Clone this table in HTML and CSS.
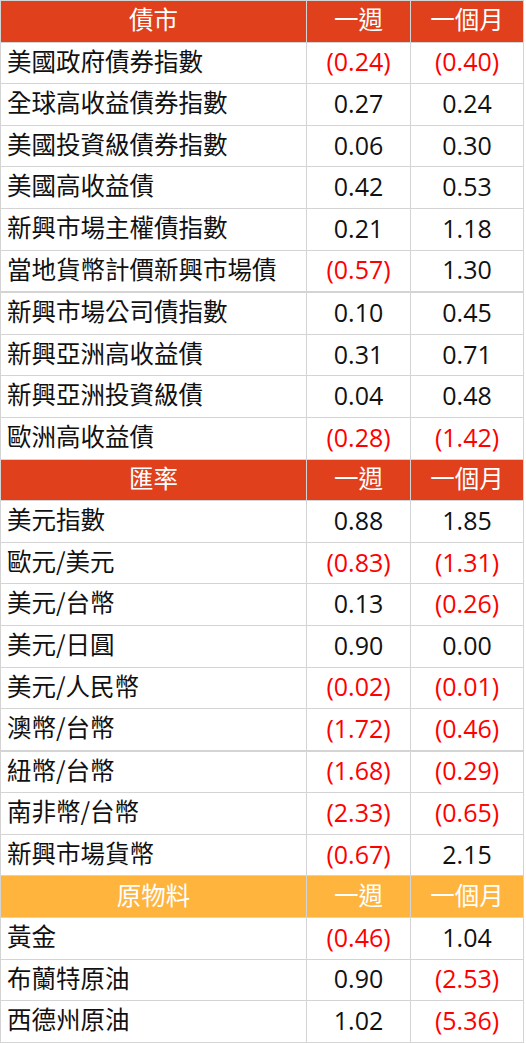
FILE: index.html
```html
<!DOCTYPE html>
<html lang="zh-Hant">
<head>
<meta charset="utf-8">
<link rel="stylesheet" href="styles.css">
</head>
<body>
<div class="table">
  <div class="row head red"><div class="c name-h">債市</div><div class="c">一週</div><div class="c">一個月</div></div>
  <div class="row"><div class="c name">美國政府債券指數</div><div class="c neg">(0.24)</div><div class="c neg">(0.40)</div></div>
  <div class="row"><div class="c name">全球高收益債券指數</div><div class="c">0.27</div><div class="c">0.24</div></div>
  <div class="row"><div class="c name">美國投資級債券指數</div><div class="c">0.06</div><div class="c">0.30</div></div>
  <div class="row"><div class="c name">美國高收益債</div><div class="c">0.42</div><div class="c">0.53</div></div>
  <div class="row"><div class="c name">新興市場主權債指數</div><div class="c">0.21</div><div class="c">1.18</div></div>
  <div class="row thick"><div class="c name">當地貨幣計價新興市場債</div><div class="c neg">(0.57)</div><div class="c">1.30</div></div>
  <div class="row"><div class="c name">新興市場公司債指數</div><div class="c">0.10</div><div class="c">0.45</div></div>
  <div class="row"><div class="c name">新興亞洲高收益債</div><div class="c">0.31</div><div class="c">0.71</div></div>
  <div class="row"><div class="c name">新興亞洲投資級債</div><div class="c">0.04</div><div class="c">0.48</div></div>
  <div class="row"><div class="c name">歐洲高收益債</div><div class="c neg">(0.28)</div><div class="c neg">(1.42)</div></div>
  <div class="row head red"><div class="c name-h">匯率</div><div class="c">一週</div><div class="c">一個月</div></div>
  <div class="row"><div class="c name">美元指數</div><div class="c">0.88</div><div class="c">1.85</div></div>
  <div class="row"><div class="c name">歐元/美元</div><div class="c neg">(0.83)</div><div class="c neg">(1.31)</div></div>
  <div class="row"><div class="c name">美元/台幣</div><div class="c">0.13</div><div class="c neg">(0.26)</div></div>
  <div class="row"><div class="c name">美元/日圓</div><div class="c">0.90</div><div class="c">0.00</div></div>
  <div class="row"><div class="c name">美元/人民幣</div><div class="c neg">(0.02)</div><div class="c neg">(0.01)</div></div>
  <div class="row thick"><div class="c name">澳幣/台幣</div><div class="c neg">(1.72)</div><div class="c neg">(0.46)</div></div>
  <div class="row"><div class="c name">紐幣/台幣</div><div class="c neg">(1.68)</div><div class="c neg">(0.29)</div></div>
  <div class="row"><div class="c name">南非幣/台幣</div><div class="c neg">(2.33)</div><div class="c neg">(0.65)</div></div>
  <div class="row"><div class="c name">新興市場貨幣</div><div class="c neg">(0.67)</div><div class="c">2.15</div></div>
  <div class="row head yellow"><div class="c name-h">原物料</div><div class="c">一週</div><div class="c">一個月</div></div>
  <div class="row"><div class="c name">黃金</div><div class="c neg">(0.46)</div><div class="c">1.04</div></div>
  <div class="row"><div class="c name">布蘭特原油</div><div class="c">0.90</div><div class="c neg">(2.53)</div></div>
  <div class="row"><div class="c name">西德州原油</div><div class="c">1.02</div><div class="c neg">(5.36)</div></div>
</div>
</body>
</html>
```

FILE: styles.css
```css
html, body {
  margin: 0;
  padding: 0;
  background: #ffffff;
}
body {
  font-family: "Open Sans", "Noto Sans CJK TC", sans-serif;
  font-size: 25px;
  color: #111111;
}
.table {
  width: 522px;
  padding: 1px;
  background: #d4d4d4;
  display: flex;
  flex-direction: column;
  gap: 1px;
}
.row {
  display: grid;
  grid-template-columns: 305px 103px 112px;
  column-gap: 1px;
  height: 40.6px;
}
.row.thick {
  margin-bottom: 1px;
}
.c {
  background: #ffffff;
  display: flex;
  align-items: center;
  justify-content: center;
  line-height: 1;
  white-space: nowrap;
  padding-bottom: 2px;
}
.c.name {
  justify-content: flex-start;
  padding-left: 6px;
  font-family: "Noto Sans CJK TC", sans-serif;
  font-size: 24.5px;
  padding-bottom: 4px;
}
.neg {
  color: #ff0000;
}
.head .c {
  color: #ffffff;
  font-family: "Noto Sans CJK TC", sans-serif;
  font-size: 24.5px;
  padding-bottom: 4px;
}
.red .c {
  background: #e0401b;
}
.yellow .c {
  background: #ffb43e;
}
```
